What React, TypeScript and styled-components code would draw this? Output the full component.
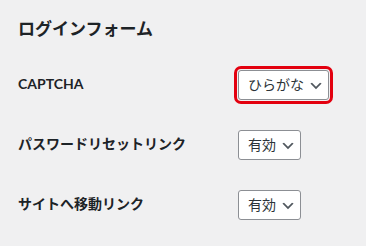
import React from "react";
import styled, { createGlobalStyle } from "styled-components";

const Global = createGlobalStyle`
  html, body { margin: 0; padding: 0; background: #f0f0f1; }
  body {
    font-family: Lato, "Noto Sans CJK JP", sans-serif;
    color: #1d2327;
    -webkit-font-smoothing: antialiased;
  }
`;

const Page = styled.div`
  width: 366px;
  height: 246px;
  box-sizing: border-box;
  padding: 17px 0 0 18px;
  background: #f0f0f1;
`;

const Title = styled.h2`
  margin: 0 0 14px;
  font-size: 17px;
  line-height: 24px;
  font-weight: 700;
  color: #1d2327;
`;

const Row = styled.div`
  display: grid;
  grid-template-columns: 220px auto;
  align-items: center;
  height: 60px;
`;

const Label = styled.div`
  font-size: 14px;
  font-weight: 700;
  line-height: 20px;
  color: #1d2327;
  margin-top: -2px;
`;

const Cell = styled.div`
  display: flex;
  align-items: center;
`;

const Select = styled.div<{ $highlight?: boolean }>`
  display: inline-flex;
  align-items: center;
  box-sizing: border-box;
  height: 30px;
  padding: 0 4px 0 9px;
  gap: 4px;
  background: #fff;
  border: 1px solid #8c8f94;
  border-radius: 3px;
  font-size: 14px;
  line-height: 28px;
  color: #2c3338;
  outline: ${(p) => (p.$highlight ? "3px solid #e3000f" : "none")};
  outline-offset: 1px;
`;

const Chevron = () => (
  <svg width="16" height="16" viewBox="0 0 20 20" style={{ marginTop: 2 }}>
    <path d="M5 6l5 5 5-5 2 1-7 7-7-7 2-1z" fill="#50575e" />
  </svg>
);

const rows = [
  { label: "CAPTCHA", value: "ひらがな", highlight: true },
  { label: "パスワードリセットリンク", value: "有効" },
  { label: "サイトへ移動リンク", value: "有効" },
];

export default function App() {
  return (
    <>
      <Global />
      <Page>
        <Title>ログインフォーム</Title>
        {rows.map((r) => (
          <Row key={r.label}>
            <Label>{r.label}</Label>
            <Cell>
              <Select $highlight={r.highlight}>
                <span>{r.value}</span>
                <Chevron />
              </Select>
            </Cell>
          </Row>
        ))}
      </Page>
    </>
  );
}
